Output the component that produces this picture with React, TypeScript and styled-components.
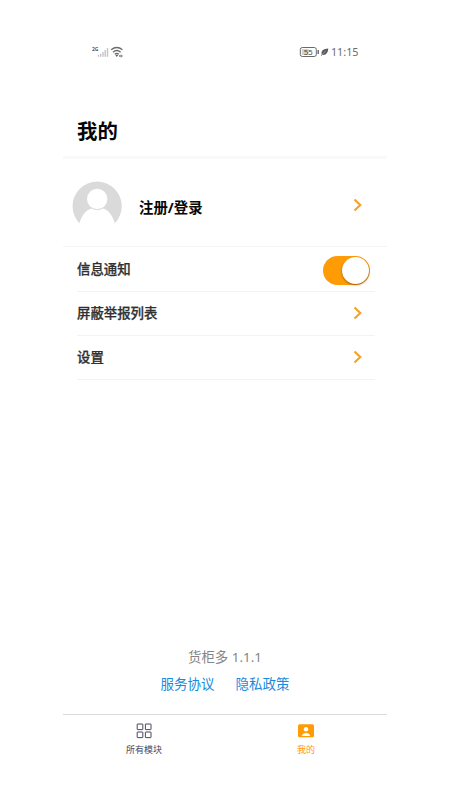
import React from "react";
import styled, { createGlobalStyle } from "styled-components";

const GlobalStyle = createGlobalStyle`
  * { box-sizing: border-box; }
  body { margin: 0; background: #fff; font-family: "Noto Sans", "Noto Sans CJK SC", sans-serif; }
`;

const Phone = styled.div`
  width: 324px;
  height: 800px;
  margin-left: 63px;
  padding-top: 40px;
  display: flex;
  flex-direction: column;
`;

const StatusBar = styled.div`
  height: 24px;
  padding: 0 28.5px 0 29px;
  display: flex;
  align-items: center;
  justify-content: space-between;
`;

const StatusGroup = styled.div`
  display: flex;
  align-items: center;
  gap: 1px;
`;

const Clock = styled.span`
  margin-left: 1px;
  font-size: 10.8px;
  line-height: 24px;
  color: #6c6c6c;
`;

const Header = styled.header`
  height: 95px;
  padding: 51px 14px 0;
  border-bottom: 3px solid #f9f9f9;
`;

const Title = styled.h1`
  margin: 0;
  font-size: 20.4px;
  line-height: 32px;
  font-weight: 700;
  color: #050505;
`;

const Profile = styled.div`
  height: 88px;
  padding: 5px 24px 0 9px;
  display: flex;
  align-items: center;
  border-bottom: 1px solid #f5f5f5;
`;

const ProfileName = styled.span`
  flex: 1;
  margin: 5px 0 0 16px;
  font-size: 14.4px;
  line-height: 20px;
  font-weight: 700;
  color: #080808;
`;

const List = styled.div`
  margin: 0 12px 0 14px;
  padding-top: 1px;
`;

const Row = styled.div<{ $end: number }>`
  height: 44px;
  padding: 0 ${(p) => p.$end}px 2px 0;
  display: flex;
  align-items: center;
  justify-content: space-between;
  border-bottom: 1px solid #f3f3f3;
`;

const RowLabel = styled.span`
  font-size: 13.4px;
  line-height: 20px;
  font-weight: 500;
  color: #303030;
  -webkit-text-stroke: 0.25px #303030;
`;

const Switch = styled.div`
  width: 47px;
  height: 29px;
  margin-top: 3px;
  padding: 1px;
  border-radius: 15px;
  background: #ff9b05;
  display: flex;
  justify-content: flex-end;
`;

const Knob = styled.div`
  width: 27px;
  height: 27px;
  border-radius: 50%;
  background: #fff;
  box-shadow: 0 1px 2px rgba(90, 50, 0, 0.6);
`;

const Footer = styled.footer`
  margin-top: auto;
  height: 67px;
  display: flex;
  flex-direction: column;
  align-items: center;
`;

const Version = styled.div`
  font-size: 13.4px;
  line-height: 20px;
  color: #858585;
`;

const Links = styled.div`
  display: flex;
  gap: 21px;
  margin-top: 7px;
`;

const Link = styled.span`
  font-size: 13.5px;
  line-height: 20px;
  color: #168be0;
`;

const TabBar = styled.nav`
  height: 86px;
  border-top: 1px solid #d9d9d9;
  display: grid;
  grid-template-columns: 1fr 1fr;
`;

const Tab = styled.div<{ $active?: boolean }>`
  padding-top: 8px;
  display: flex;
  flex-direction: column;
  align-items: center;
  color: ${(p) => (p.$active ? "#ff9b05" : "#49455f")};
`;

const TabLabel = styled.span`
  margin-top: 4px;
  font-size: 9px;
  line-height: 14px;
`;

const Signal = () => (
  <svg width="17" height="14" viewBox="0 0 17 14">
    <text x="0" y="6" fontSize="5" fontWeight="700" fontFamily="Noto Sans" fill="#555">2G</text>
    <path d="M6.5 11.7v-2M8.7 11.7V8.7M11 11.7V7M13.2 11.7V5M15.5 11.7V3" stroke="#c4c4c4" strokeWidth="1.4" />
  </svg>
);

const Wifi = () => (
  <svg width="14" height="14" viewBox="0 0 14 14">
    <path d="M1.2 4.8Q6.8 .2 12.4 4.8M3 7.2Q6.8 4 10.6 7.2M4.8 9.3Q6.8 7.7 8.8 9.3" fill="none" stroke="#6b6b6b" strokeWidth="1.4" />
    <path d="M5.5 10h2.6L6.8 12zM10.5 9.5l-1.6 1.6 1.6 1.3zM11.3 9.5l1.5 1.6-1.5 1.3z" fill="#555" />
  </svg>
);

const Battery = () => (
  <svg width="20" height="12" viewBox="0 0 20 12">
    <rect x="1.3" y="1.5" width="16" height="9" rx="2" fill="#fff" stroke="#686868" />
    <rect x="2.8" y="3" width="7" height="6" fill="#d2d2d2" />
    <text x="9.3" y="8.8" textAnchor="middle" fontSize="7.8" fontFamily="Noto Sans" fill="#444">55</text>
    <path d="M19.2 4v4" stroke="#686868" strokeWidth="1.4" />
  </svg>
);

const Leaf = () => (
  <svg width="9" height="10" viewBox="0 0 9 10">
    <path d="M1.8 7.5C.6 3.5 4 1.8 8.2 1.5 8.2 5.5 6 8.5 2.6 7.8L1.2 9 .9 8.6z" fill="#595959" />
    <path d="M2.2 7.4L5.8 3.9" stroke="#ddd" strokeWidth=".5" />
  </svg>
);

const Avatar = () => (
  <svg width="51" height="50" viewBox="0 -1 51 50">
    <path d="M7.5 42.3A24.6 24.6 0 1 1 42.8 42.3C40.5 33.5 35.5 28.5 31 27.5Q25 30.5 19.5 27.5C14 29 9.5 34.5 7.5 42.3Z" fill="#dadada" />
    <circle cx="25.2" cy="18" r="10.2" fill="#fff" />
  </svg>
);

const Chevron = () => (
  <svg width="10" height="14" viewBox="0 0 10 14">
    <path d="M1.5 1.5L7.3 7L1.5 12.5" fill="none" stroke="#f6a024" strokeWidth="2.1" />
  </svg>
);

const GridIcon = () => (
  <svg width="16" height="16" viewBox="0 0 16 16" fill="none" stroke="currentColor">
    <rect x="1.2" y="1" width="5.6" height="5.6" rx=".3" />
    <rect x="9.4" y="1" width="5.6" height="5.6" rx=".3" />
    <rect x="1.2" y="9" width="5.6" height="5.6" rx=".3" />
    <rect x="9.4" y="9" width="5.6" height="5.6" rx=".3" />
  </svg>
);

const UserIcon = () => (
  <svg width="16" height="16" viewBox="0 0 16 16">
    <rect x="0" y="1.3" width="16" height="13" rx="1.6" fill="currentColor" />
    <circle cx="8" cy="6.2" r="2.2" fill="#fff" />
    <path d="M3.8 12.9Q4.5 9.9 8 9.9T12.2 12.9Z" fill="#fff" />
  </svg>
);

export default function App() {
  return (
    <>
      <GlobalStyle />
      <Phone>
        <StatusBar>
          <StatusGroup><Signal /><Wifi /></StatusGroup>
          <StatusGroup><Battery /><Leaf /><Clock>11:15</Clock></StatusGroup>
        </StatusBar>
        <Header><Title>我的</Title></Header>
        <Profile>
          <Avatar />
          <ProfileName>注册/登录</ProfileName>
          <Chevron />
        </Profile>
        <List>
          <Row $end={5}><RowLabel>信息通知</RowLabel><Switch><Knob /></Switch></Row>
          <Row $end={12}><RowLabel>屏蔽举报列表</RowLabel><Chevron /></Row>
          <Row $end={12}><RowLabel>设置</RowLabel><Chevron /></Row>
        </List>
        <Footer>
          <Version>货柜多 1.1.1</Version>
          <Links><Link>服务协议</Link><Link>隐私政策</Link></Links>
        </Footer>
        <TabBar>
          <Tab><GridIcon /><TabLabel>所有模块</TabLabel></Tab>
          <Tab $active><UserIcon /><TabLabel>我的</TabLabel></Tab>
        </TabBar>
      </Phone>
    </>
  );
}
